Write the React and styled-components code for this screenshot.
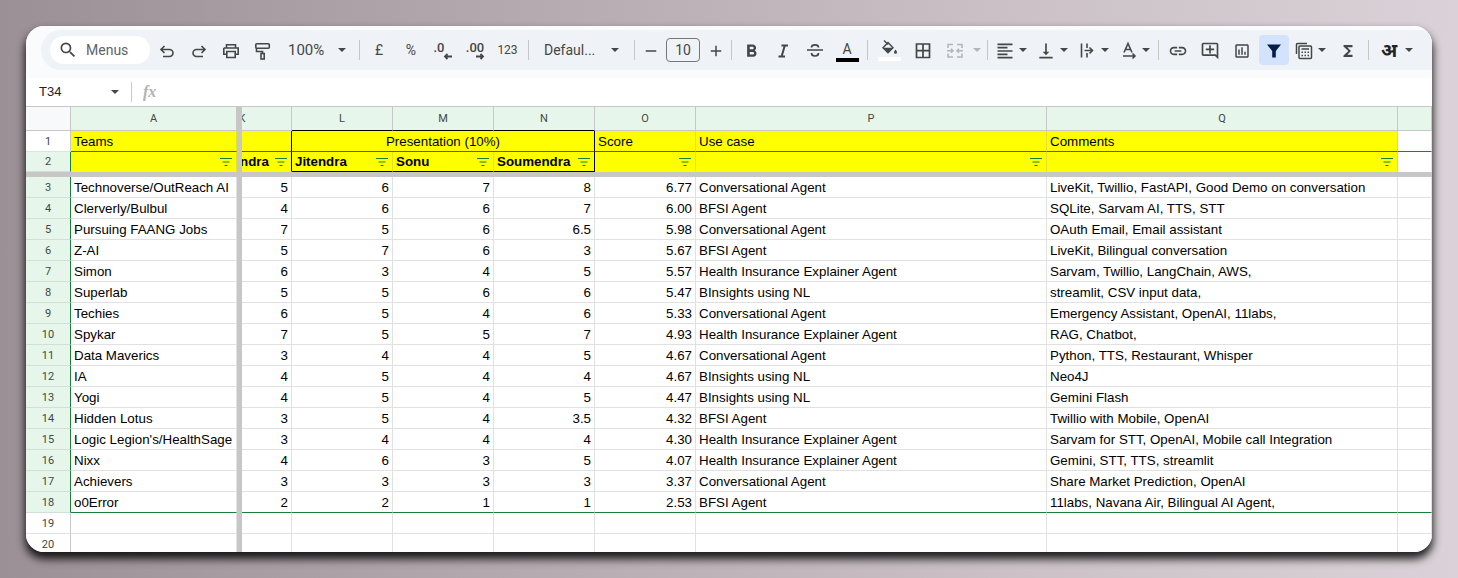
import styled, { createGlobalStyle } from 'styled-components'
import {
	MdOutlineSearch,
	MdFormatBold,
	MdFormatAlignLeft,
	MdVerticalAlignBottom,
	MdLink,
	MdOutlineAddComment,
	MdOutlineAssessment,
	MdFunctions,
	MdAdd,
	MdRemove,
} from 'react-icons/md'

const GlobalStyle = createGlobalStyle`
	html, body {
		margin: 0;
		height: 578px;
		overflow: hidden;
	}
	body {
		background: linear-gradient(90deg, #9b9096 0%, #b4a9af 35%, #cbc1c7 70%, #dad2d8 100%);
		font-family: "Liberation Sans", Arial, sans-serif;
		padding: 26px;
		box-sizing: border-box;
	}
`

const Window = styled.div`
	width: 1406px;
	height: 526px;
	background: #fff;
	border-radius: 18px;
	overflow: hidden;
	box-shadow: 0 6px 9px 1px rgba(0, 0, 0, 0.85);
`

const ToolbarWrap = styled.div`
	height: 52px;
	box-sizing: border-box;
	padding: 4px 0 8px 15px;
	background: #f9fbfd;
`

const Toolbar = styled.div`
	height: 40px;
	display: flex;
	align-items: center;
	padding-left: 9px;
	background: #eff3f8;
	border-radius: 20px 0 0 20px;
	color: #444746;
`

const SearchPill = styled.div`
	width: 100px;
	height: 28px;
	flex: none;
	box-sizing: border-box;
	padding-left: 8px;
	display: flex;
	align-items: center;
	gap: 8px;
	background: #fff;
	border-radius: 14px;
	font: 14px Roboto, sans-serif;
	color: #5f6368;
	margin-right: 1px;
	svg {
		font-size: 20px;
		color: #444746;
	}
`

const Tool = styled.div`
	width: ${p => p.$w || 32}px;
	height: 30px;
	flex: none;
	display: flex;
	align-items: center;
	justify-content: center;
	font-family: Roboto, sans-serif;
	font-size: ${p => p.$size || 13}px;
	color: #444746;
	border-radius: 4px;
	background: ${p => (p.$active ? '#d3e3fd' : 'transparent')};
	margin: 0 ${p => (p.$active ? 1 : 0)}px;
	svg {
		margin-top: 2px;
		font-size: ${p => p.$icon || 20}px;
		color: #444746;
	}
`

const Caret = styled.span`
	display: block;
	flex: none;
	width: 0;
	height: 0;
	border-left: 4px solid transparent;
	border-right: 4px solid transparent;
	border-top: 4px solid ${p => (p.$muted ? '#b4b6b8' : '#444746')};
`

const CaretSlot = styled.div`
	width: ${p => p.$w || 8}px;
	flex: none;
	display: flex;
	justify-content: ${p => (p.$center ? 'center' : 'flex-start')};
`

const Sep = styled.div`
	width: 1px;
	height: 20px;
	flex: none;
	background: #c7c7c7;
	margin: 0 ${p => p.$right ?? 4}px 0 ${p => p.$left ?? 4}px;
`

const ZoomValue = styled.div`
	width: 54px;
	box-sizing: border-box;
	flex: none;
	padding-left: 9px;
	font: 15px Roboto, sans-serif;
	color: #444746;
`

const FontName = styled.div`
	width: 70px;
	box-sizing: border-box;
	flex: none;
	padding-left: 11px;
	font: 14px Roboto, sans-serif;
	color: #444746;
`

const SizeBox = styled.div`
	width: 34px;
	height: 24px;
	box-sizing: border-box;
	flex: none;
	border: 1px solid #747775;
	border-radius: 4px;
	display: flex;
	align-items: center;
	justify-content: center;
	font: 14px Roboto, sans-serif;
	color: #444746;
`

const DecimalTool = styled.div`
	width: 32px;
	flex: none;
	display: flex;
	flex-direction: column;
	align-items: center;
	font: 500 13px/11px Roboto, sans-serif;
	color: #444746;
	padding-top: 2px;
	span {
		margin-left: ${p => p.$text}px;
	}
	svg {
		display: block;
		margin-top: 0;
		margin-left: ${p => p.$arrow}px;
	}
`

const ColorA = styled.div`
	width: 32px;
	flex: none;
	display: flex;
	flex-direction: column;
	align-items: center;
	font: 14px/13px Roboto, sans-serif;
	color: #444746;
	padding-top: 5px;
	i {
		display: block;
		width: 23px;
		height: 4px;
		margin-top: 2px;
		background: ${p => p.$bar};
	}
`

const FillTool = styled(ColorA)`
	padding-top: 0;
	svg {
		display: block;
		margin-bottom: 3px;
	}
	i {
		margin-top: 0;
	}
`

const HindiGlyph = styled.div`
	width: 32px;
	flex: none;
	text-align: center;
	font: bold 19px/24px "Noto Sans", "DejaVu Sans", sans-serif;
	color: #222;
`

const FormulaBar = styled.div`
	height: 28px;
	box-sizing: border-box;
	padding: 0 0 1px 13px;
	display: flex;
	align-items: center;
	background: #fff;
	color: #444746;
`

const NameBox = styled.div`
	width: 72px;
	flex: none;
	font: 13px "Liberation Sans", sans-serif;
	color: #202124;
`

const FxMark = styled.div`
	margin-left: 11px;
	font: italic bold 16px "Liberation Serif", serif;
	color: #b0b3b5;
`

const TEMPLATE = '45px 166px 5px 50px 101px 101px 101px 101px 351px 351px 1fr'

const Row = styled.div`
	display: grid;
	grid-template-columns: ${TEMPLATE};
	height: ${p => p.$h || 21}px;
`

const Sheet = styled.div`
	border-top: 1px solid #c7c7c7;
`

const Band = styled.div`
	height: 5px;
	background: #c7c7c7;
`

const ColHead = styled.div`
	box-sizing: border-box;
	background: ${p => (p.$corner ? '#f8f9fa' : '#e6f6ea')};
	border-right: 1px solid #c7c7c7;
	border-bottom: 1px solid ${p => p.$bottom || '#c7c7c7'};
	display: flex;
	align-items: center;
	justify-content: center;
	font: 11px Roboto, "Liberation Sans", sans-serif;
	color: #444746;
	overflow: hidden;
`

const ClippedK = styled.span`
	margin-left: -49px;
`

const RowNum = styled.div`
	box-sizing: border-box;
	background: ${p => (p.$filtered ? '#e6f6ea' : '#fff')};
	border-right: 1px solid ${p => (p.$green ? '#188038' : '#c7c7c7')};
	border-bottom: 1px solid ${p => (p.$filtered ? '#d3dfd6' : '#e1e1e1')};
	display: flex;
	align-items: center;
	justify-content: center;
	font: 11px Roboto, "Liberation Sans", sans-serif;
	color: #444746;
`

const Frozen = styled.div`
	background: #c7c7c7;
`

const Cell = styled.div`
	box-sizing: border-box;
	min-width: 0;
	display: flex;
	align-items: center;
	justify-content: ${p => (p.$align === 'right' ? 'flex-end' : p.$align === 'center' ? 'center' : 'flex-start')};
	padding: 0 3px;
	overflow: hidden;
	white-space: nowrap;
	background: ${p => (p.$fill ? '#ffff00' : '#fff')};
	border-right: 1px solid ${p => p.$right || '#e1e1e1'};
	border-bottom: 1px solid ${p => p.$bottom || '#e1e1e1'};
	font: ${p => (p.$bold ? 'bold ' : '')}13.33px "Liberation Sans", Arial, sans-serif;
	color: #000;
	${p => p.$span && `grid-column: span ${p.$span};`}
`

const HeadCell = styled(Cell)`
	justify-content: space-between;
	padding-right: 3px;
	gap: 4px;
`

const ClippedName = styled.span`
	margin-left: -5px;
	flex: none;
`

const GREEN = '#188038'
const YELLOW_LINE = '#e2e22a'

const FilterGlyph = styled.svg`
	flex: none;
	margin-left: auto;
`

function FilterIcon() {
	return (
		<FilterGlyph width="14" height="10" viewBox="0 0 14 10">
			<path d="M1 1.5h12M3.5 5h7M5.5 8.5h3" stroke="#188038" strokeWidth="1" fill="none" />
		</FilterGlyph>
	)
}

function StrokeIcon({ children, color = '#444746', w = 1.6 }) {
	return (
		<svg width="20" height="20" viewBox="0 0 20 20" fill="none" stroke={color} strokeWidth={w}>
			{children}
		</svg>
	)
}

const UndoIcon = () => (
	<StrokeIcon>
		<path d="M7.5 5L4 8.5 7.5 12M4 8.5h8.5a3.5 3.5 0 0 1 0 7H6" />
	</StrokeIcon>
)

const RedoIcon = () => (
	<StrokeIcon>
		<path d="M12.5 5L16 8.5 12.5 12M16 8.5H7.5a3.5 3.5 0 0 0 0 7H14" />
	</StrokeIcon>
)

const PrintIcon = () => (
	<StrokeIcon>
		<path d="M5.5 7V3.8h9V7M2.8 7h14.4v6.2h-3M5.8 13.2h-3V7M5.8 10.5h8.4v6h-8.4z" />
	</StrokeIcon>
)

const PaintIcon = () => (
	<StrokeIcon>
		<rect x="2.8" y="2.8" width="13.5" height="4.4" rx="1" />
		<path d="M3.5 7v3.5h6v2" />
		<rect x="8" y="12.5" width="3.2" height="5.5" />
	</StrokeIcon>
)

const ItalicIcon = () => (
	<StrokeIcon w={2}>
		<path d="M8.5 4.5H15M5.5 15.5H12M11.8 4.5L8.6 15.5" />
	</StrokeIcon>
)

const StrikeIcon = () => (
	<StrokeIcon w={1.7}>
		<path d="M2 9h16M6.5 6.5C6.5 3 13.5 3 13.5 6.5M6.5 12c0 4 7 4 7 0" />
	</StrokeIcon>
)

const BorderIcon = () => (
	<StrokeIcon w={1.7}>
		<path d="M3.5 3h13v13.5h-13zM10 3v13.5M3.5 9.7h13" />
	</StrokeIcon>
)

const MergeIcon = () => (
	<StrokeIcon color="#b4b6b8">
		<path d="M3 7V3.5h5M17 7V3.5h-5M3 12.5V16h5M17 12.5V16h-5" />
		<path d="M2 9.7h6M6 7.7l2 2-2 2M18 9.7h-6M14 7.7l-2 2 2 2" />
	</StrokeIcon>
)

const WrapIcon = () => (
	<StrokeIcon>
		<path d="M4.5 2.5v14M10 2.5V7M10 12v4.5M7.5 9.5h8M12.5 6.5l3 3-3 3" />
	</StrokeIcon>
)

const RotateIcon = () => (
	<StrokeIcon>
		<path d="M6 11.5L10 2.5l4 9M7.5 8.5h5M5 15h12M14.5 12.5L17 15l-2.5 2.5" />
	</StrokeIcon>
)

const CalcIcon = () => (
	<StrokeIcon w={1.5}>
		<path d="M2.5 13V3.5a1 1 0 0 1 1-1H13" />
		<rect x="5" y="5" width="12.5" height="12.5" rx="1" />
		<path d="M7.5 8h7.5M7.5 11.2h1.5M10.5 11.2H12M13.5 11.2H15M7.5 14.5h1.5M10.5 14.5H12M13.5 14.5H15" />
	</StrokeIcon>
)

const FunnelIcon = () => (
	<svg width="20" height="20" viewBox="0 0 20 20" fill="#041e49">
		<path d="M3 3.5h14L11.8 10v6.5H8.2V10z" />
	</svg>
)

const BucketIcon = () => (
	<svg width="18" height="14" viewBox="0 0 18 14" fill="none" stroke="#444746" strokeWidth="1.4">
		<path d="M4 .5l4 4M8 2.5l5 5.2-5 5-5-5z" />
		<path d="M3 7.7h10l-5 5z" fill="#444746" stroke="none" />
		<path d="M15.5 9.5c-1 1.4-1.5 2-1.5 2.7a1.5 1.5 0 0 0 3 0c0-.7-.5-1.3-1.5-2.7z" fill="#444746" stroke="none" />
	</svg>
)

const ArrowLeft = () => (
	<svg width="9" height="7" viewBox="0 0 9 7" fill="none" stroke="#444746" strokeWidth="1.8">
		<path d="M9 3.5H2M4.5 1L2 3.5 4.5 6" />
	</svg>
)

const ArrowRight = () => (
	<svg width="9" height="7" viewBox="0 0 9 7" fill="none" stroke="#444746" strokeWidth="1.8">
		<path d="M0 3.5h7M4.5 1L7 3.5 4.5 6" />
	</svg>
)

const data = [
	['Technoverse/OutReach AI', 5, 6, 7, 8, '6.77', 'Conversational Agent', 'LiveKit, Twillio, FastAPI, Good Demo on conversation'],
	['Clerverly/Bulbul', 4, 6, 6, 7, '6.00', 'BFSI Agent', 'SQLite, Sarvam AI, TTS, STT'],
	['Pursuing FAANG Jobs', 7, 5, 6, 6.5, '5.98', 'Conversational Agent', 'OAuth Email, Email assistant'],
	['Z-AI', 5, 7, 6, 3, '5.67', 'BFSI Agent', 'LiveKit, Bilingual conversation'],
	['Simon', 6, 3, 4, 5, '5.57', 'Health Insurance Explainer Agent', 'Sarvam, Twillio, LangChain, AWS,'],
	['Superlab', 5, 5, 6, 6, '5.47', 'BInsights using NL', 'streamlit, CSV input data,'],
	['Techies', 6, 5, 4, 6, '5.33', 'Conversational Agent', 'Emergency Assistant, OpenAI, 11labs,'],
	['Spykar', 7, 5, 5, 7, '4.93', 'Health Insurance Explainer Agent', 'RAG, Chatbot,'],
	['Data Maverics', 3, 4, 4, 5, '4.67', 'Conversational Agent', 'Python, TTS, Restaurant, Whisper'],
	['IA', 4, 5, 4, 4, '4.67', 'BInsights using NL', 'Neo4J'],
	['Yogi', 4, 5, 4, 5, '4.47', 'BInsights using NL', 'Gemini Flash'],
	['Hidden Lotus', 3, 5, 4, 3.5, '4.32', 'BFSI Agent', 'Twillio with Mobile, OpenAI'],
	["Logic Legion's/HealthSage", 3, 4, 4, 4, '4.30', 'Health Insurance Explainer Agent', 'Sarvam for STT, OpenAI, Mobile call Integration'],
	['Nixx', 4, 6, 3, 5, '4.07', 'Health Insurance Explainer Agent', 'Gemini, STT, TTS, streamlit'],
	['Achievers', 3, 3, 3, 3, '3.37', 'Conversational Agent', 'Share Market Prediction, OpenAI'],
	['o0Error', 2, 2, 1, 1, '2.53', 'BFSI Agent', '11labs, Navana Air, Bilingual AI Agent,'],
]

function DataRow({ row, num, last }) {
	const bottom = last ? GREEN : undefined
	const [team, k, l, m, n, score, useCase, comments] = row
	return (
		<Row>
			<RowNum $filtered $green>{num}</RowNum>
			<Cell $bottom={bottom}>{team}</Cell>
			<Frozen />
			<Cell $align="right" $bottom={bottom}>{k}</Cell>
			<Cell $align="right" $bottom={bottom}>{l}</Cell>
			<Cell $align="right" $bottom={bottom}>{m}</Cell>
			<Cell $align="right" $bottom={bottom}>{n}</Cell>
			<Cell $align="right" $bottom={bottom}>{score}</Cell>
			<Cell $bottom={bottom}>{useCase}</Cell>
			<Cell $bottom={bottom}>{comments}</Cell>
			<Cell $bottom={bottom} />
		</Row>
	)
}

function EmptyRow({ num }) {
	return (
		<Row>
			<RowNum>{num}</RowNum>
			<Cell />
			<Frozen />
			<Cell />
			<Cell />
			<Cell />
			<Cell />
			<Cell />
			<Cell />
			<Cell />
			<Cell />
		</Row>
	)
}

export default function App() {
	return (
		<>
			<GlobalStyle />
			<Window>
				<ToolbarWrap>
					<Toolbar>
						<SearchPill><MdOutlineSearch />Menus</SearchPill>
						<Tool><UndoIcon /></Tool>
						<Tool><RedoIcon /></Tool>
						<Tool><PrintIcon /></Tool>
						<Tool><PaintIcon /></Tool>
						<ZoomValue>100%</ZoomValue>
						<CaretSlot $w={18} $center><Caret /></CaretSlot>
						<Sep $left={8} $right={3} />
						<Tool $size={14}>£</Tool>
						<Tool $size={14}>%</Tool>
						<DecimalTool $text={-8} $arrow={8}><span>.0</span><ArrowLeft /></DecimalTool>
						<DecimalTool $text={0} $arrow={10}><span>.00</span><ArrowRight /></DecimalTool>
						<Tool $w={33} $size={12}>123</Tool>
						<Sep />
						<FontName>Defaul...</FontName>
						<CaretSlot $w={24} $center><Caret /></CaretSlot>
						<Sep $left={7} $right={0} />
						<Tool $w={31} $icon={18}><MdRemove /></Tool>
						<SizeBox>10</SizeBox>
						<Tool $w={31} $icon={18}><MdAdd /></Tool>
						<Sep $left={0} $right={3} />
						<Tool $icon={21}><MdFormatBold /></Tool>
						<Tool><ItalicIcon /></Tool>
						<Tool><StrikeIcon /></Tool>
						<ColorA $bar="#000">A<i /></ColorA>
						<Sep $left={4} $right={5} />
						<FillTool $bar="#fff"><BucketIcon /><i /></FillTool>
						<Tool $w={36}><BorderIcon /></Tool>
						<Tool $w={28}><MergeIcon /></Tool>
						<CaretSlot $w={16} $center><Caret $muted /></CaretSlot>
						<Sep $left={2} $right={3} />
						<Tool $w={28}><MdFormatAlignLeft /></Tool>
						<CaretSlot $w={13}><Caret /></CaretSlot>
						<Tool $w={28}><MdVerticalAlignBottom /></Tool>
						<CaretSlot $w={13}><Caret /></CaretSlot>
						<Tool $w={28}><WrapIcon /></Tool>
						<CaretSlot $w={13}><Caret /></CaretSlot>
						<Tool $w={28}><RotateIcon /></Tool>
						<CaretSlot $w={13}><Caret /></CaretSlot>
						<Sep $left={3} $right={3} />
						<Tool><MdLink /></Tool>
						<Tool><MdOutlineAddComment /></Tool>
						<Tool $icon={18}><MdOutlineAssessment /></Tool>
						<Tool $active $w={30}><FunnelIcon /></Tool>
						<Tool $w={28}><CalcIcon /></Tool>
						<CaretSlot $w={14}><Caret /></CaretSlot>
						<Tool $icon={18}><MdFunctions /></Tool>
						<Sep />
						<HindiGlyph>अ</HindiGlyph>
						<CaretSlot><Caret /></CaretSlot>
					</Toolbar>
				</ToolbarWrap>
				<FormulaBar>
					<NameBox>T34</NameBox>
					<Caret />
					<Sep $left={12} $right={0} />
					<FxMark>fx</FxMark>
				</FormulaBar>
				<Sheet>
					<Row $h={24}>
						<ColHead $corner />
						<ColHead>A</ColHead>
						<Frozen />
						<ColHead><ClippedK>K</ClippedK></ColHead>
						<ColHead $bottom="#000">L</ColHead>
						<ColHead $bottom="#000">M</ColHead>
						<ColHead $bottom="#000">N</ColHead>
						<ColHead>O</ColHead>
						<ColHead>P</ColHead>
						<ColHead>Q</ColHead>
						<ColHead />
					</Row>
					<Row>
						<RowNum>1</RowNum>
						<Cell $fill $bottom={GREEN} $right={YELLOW_LINE}>Teams</Cell>
						<Frozen />
						<Cell $fill $bottom={GREEN} $right="#000" />
						<Cell $fill $span={3} $align="center" $bottom={GREEN} $right="#000">Presentation (10%)</Cell>
						<Cell $fill $bottom={GREEN} $right={YELLOW_LINE}>Score</Cell>
						<Cell $fill $bottom={GREEN} $right={YELLOW_LINE}>Use case</Cell>
						<Cell $fill $bottom={GREEN} $right={YELLOW_LINE}>Comments</Cell>
						<Cell $bottom={GREEN} />
					</Row>
					<Row $h={20}>
						<RowNum $filtered $green>2</RowNum>
						<HeadCell $fill $bottom="#ffff00" $right={YELLOW_LINE}><FilterIcon /></HeadCell>
						<Frozen />
						<HeadCell $fill $bold $bottom="#ffff00" $right="#000"><ClippedName>ndra</ClippedName><FilterIcon /></HeadCell>
						<HeadCell $fill $bold $bottom="#000" $right={YELLOW_LINE}>Jitendra<FilterIcon /></HeadCell>
						<HeadCell $fill $bold $bottom="#000" $right={YELLOW_LINE}>Sonu<FilterIcon /></HeadCell>
						<HeadCell $fill $bold $bottom="#000" $right="#000">Soumendra<FilterIcon /></HeadCell>
						<HeadCell $fill $bottom="#ffff00" $right={YELLOW_LINE}><FilterIcon /></HeadCell>
						<HeadCell $fill $bottom="#ffff00" $right={YELLOW_LINE}><FilterIcon /></HeadCell>
						<HeadCell $fill $bottom="#ffff00" $right={YELLOW_LINE}><FilterIcon /></HeadCell>
						<Cell $bottom="#fff" />
					</Row>
					<Band />
					{data.map((row, i) => (
						<DataRow key={row[0]} row={row} num={i + 3} last={i === data.length - 1} />
					))}
					<EmptyRow num={19} />
					<EmptyRow num={20} />
				</Sheet>
			</Window>
		</>
	)
}
